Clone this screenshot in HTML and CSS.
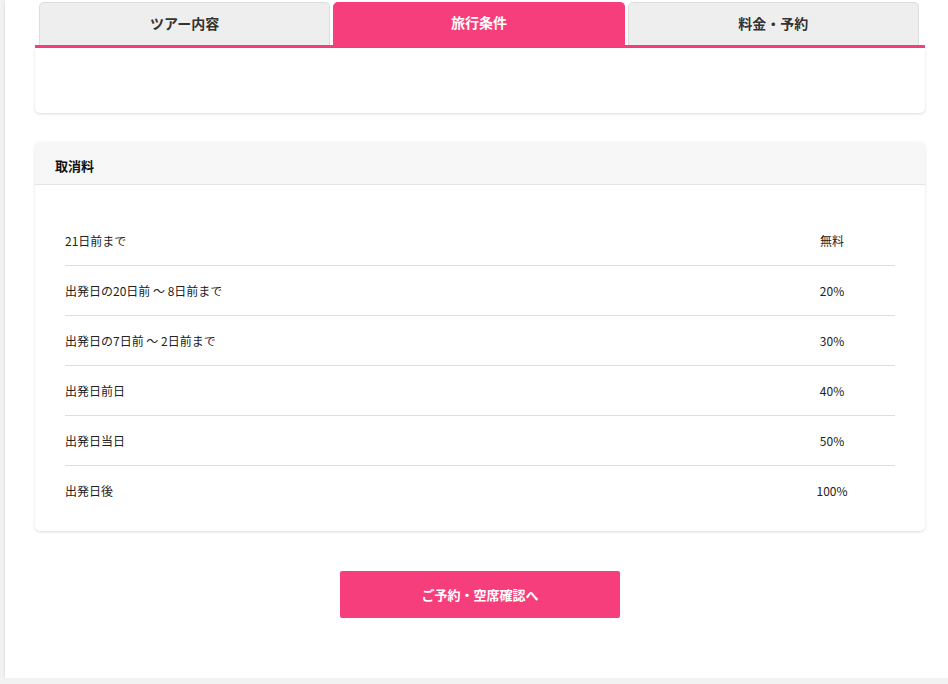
FILE: index.html
```html
<!DOCTYPE html>
<html lang="ja">
<head>
<meta charset="utf-8">
<title>旅行条件</title>
<link rel="stylesheet" href="styles.css">
</head>
<body>
<div class="page">
  <div class="tabcard">
    <nav class="tabs">
      <div class="tab">ツアー内容</div>
      <div class="tab active">旅行条件</div>
      <div class="tab">料金・予約</div>
    </nav>
    <div class="tabbody"></div>
  </div>

  <section class="card">
    <header class="card-head">取消料</header>
    <div class="card-body">
      <table class="fees">
        <tr><td>21日前まで</td><td class="val">無料</td></tr>
        <tr><td>出発日の20日前 ～ 8日前まで</td><td class="val">20%</td></tr>
        <tr><td>出発日の7日前 ～ 2日前まで</td><td class="val">30%</td></tr>
        <tr><td>出発日前日</td><td class="val">40%</td></tr>
        <tr><td>出発日当日</td><td class="val">50%</td></tr>
        <tr><td>出発日後</td><td class="val">100%</td></tr>
      </table>
    </div>
  </section>

  <div class="actions">
    <a class="btn">ご予約・空席確認へ</a>
  </div>
</div>
</body>
</html>
```
FILE: styles.css
```css
html, body {
  margin: 0;
  padding: 0;
}
body {
  background: #f2f2f2;
  font-family: "Noto Sans CJK JP", "Noto Sans", sans-serif;
  color: #222;
  overflow: hidden;
}
.page {
  margin-left: 5px;
  width: 960px;
  background: #fff;
  box-shadow: 0 1px 3px rgba(0,0,0,0.12);
  padding: 2px 0 60px 30px;
  box-sizing: border-box;
}
.tabcard {
  width: 890px;
}
.tabs {
  display: flex;
  gap: 3px;
  padding: 0 6px 0 4px;
  border-bottom: 3px solid #f73e7c;
  height: 43px;
}
.tab {
  flex: 1;
  background: #eee;
  border: 1px solid #ddd;
  border-bottom: none;
  border-radius: 5px 5px 0 0;
  display: flex;
  align-items: center;
  justify-content: center;
  font-size: 14px;
  font-weight: bold;
  color: #333;
  padding-bottom: 2px;
  box-sizing: border-box;
}
.tab.active {
  background: #f73e7c;
  border-color: #f73e7c;
  color: #fff;
  padding-bottom: 4px;
}
.tabbody {
  height: 65px;
  background: #fff;
  border-radius: 0 0 5px 5px;
  box-shadow: 0 1px 3px rgba(0,0,0,0.14);
}
.card {
  width: 890px;
  margin-top: 29px;
  background: #fff;
  border-radius: 5px;
  box-shadow: 0 1px 3px rgba(0,0,0,0.14);
  overflow: hidden;
}
.card-head {
  background: #f7f7f7;
  border-bottom: 1px solid #e5e5e5;
  height: 43px;
  box-sizing: border-box;
  padding: 4px 20px 0;
  display: flex;
  align-items: center;
  font-size: 13px;
  font-weight: bold;
  color: #111;
}
.card-body {
  padding: 31px 30px 16px;
}
.fees {
  width: 100%;
  border-collapse: collapse;
  font-size: 12px;
}
.fees td {
  height: 49px;
  padding: 0;
  border-bottom: 1px solid #ddd;
  vertical-align: middle;
}
.fees tr:last-child td {
  border-bottom: none;
}
.fees td.val {
  width: 126px;
  text-align: center;
}
.actions {
  width: 890px;
  margin-top: 40px;
  display: flex;
  justify-content: center;
}
.btn {
  display: flex;
  align-items: center;
  justify-content: center;
  width: 280px;
  height: 47px;
  background: #f73e7c;
  border-radius: 2px;
  color: #fff;
  font-size: 13px;
  font-weight: bold;
}
```
